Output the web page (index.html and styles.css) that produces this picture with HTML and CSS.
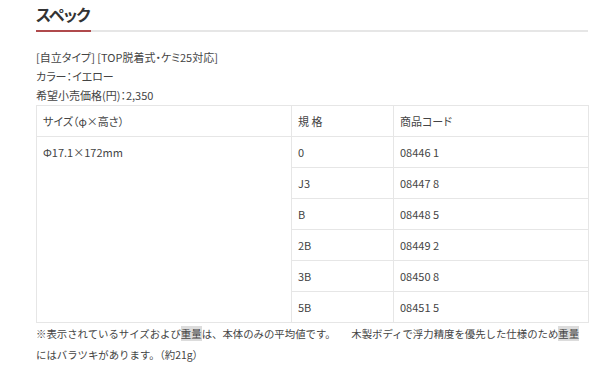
FILE: index.html
```html
<!DOCTYPE html>
<html lang="ja">
<head>
<meta charset="utf-8">
<link rel="stylesheet" href="styles.css">
</head>
<body>
<div class="page">
  <h2 class="title"><span class="title-text">スペック</span></h2>
  <div class="spec-lines">
    <p class="line">[自立タイプ] [TOP脱着式・ケミ25対応]</p>
    <p class="line">カラー：イエロー</p>
    <p class="line">希望小売価格(円)：2,350</p>
  </div>
  <table class="spec-table">
    <colgroup>
      <col class="c1">
      <col class="c2">
      <col class="c3">
    </colgroup>
    <tr>
      <td>サイズ（φ×高さ）</td>
      <td>規 格</td>
      <td>商品コード</td>
    </tr>
    <tr>
      <td rowspan="6" class="size">Φ17.1×172mm</td>
      <td>0</td>
      <td>08446 1</td>
    </tr>
    <tr><td>J3</td><td>08447 8</td></tr>
    <tr><td>B</td><td>08448 5</td></tr>
    <tr><td>2B</td><td>08449 2</td></tr>
    <tr><td>3B</td><td>08450 8</td></tr>
    <tr><td>5B</td><td>08451 5</td></tr>
  </table>
  <p class="note">※表示されているサイズおよび<span class="hl">重量</span>は、本体のみの平均値です。　　木製ボディで浮力精度を優先した仕様のため<span class="hl">重量</span>にはバラツキがあります。（約21g）</p>
</div>
</body>
</html>
```

FILE: styles.css
```css
html, body {
  margin: 0;
  padding: 0;
  background: #ffffff;
}

body {
  font-family: "Noto Sans CJK JP", "Noto Sans", sans-serif;
  color: #444444;
  font-size: 11px;
}

.page {
  padding: 0 12px 0 36px;
}

.title {
  margin: 0;
  padding-top: 2px;
  border-bottom: 2px solid #e6e6e6;
  font-size: 16px;
  font-weight: bold;
  color: #333333;
  letter-spacing: -1px;
  font-feature-settings: "palt";
}

.title-text {
  display: inline-block;
  line-height: 22px;
  padding-bottom: 5px;
  padding-right: 1px;
  margin-bottom: -2px;
  border-bottom: 2px solid #b04a4c;
}

.spec-lines {
  margin-top: 16px;
  font-feature-settings: "palt";
}

.line {
  margin: 0;
  line-height: 19px;
}

.spec-table {
  width: 552px;
  border-collapse: collapse;
  table-layout: fixed;
}

.c1 { width: 255px; }
.c2 { width: 102px; }
.c3 { width: 195px; }

.spec-table td {
  border: 1px solid #e6e6e6;
  height: 30px;
  padding: 0 6px;
  line-height: 19px;
  vertical-align: middle;
  font-feature-settings: "palt";
}

.spec-table td.size {
  vertical-align: top;
  padding-top: 6px;
}

.note {
  margin: 0;
  font-size: 10.4px;
  line-height: 21px;
}

.hl {
  background: #dcdcdc;
}
```
